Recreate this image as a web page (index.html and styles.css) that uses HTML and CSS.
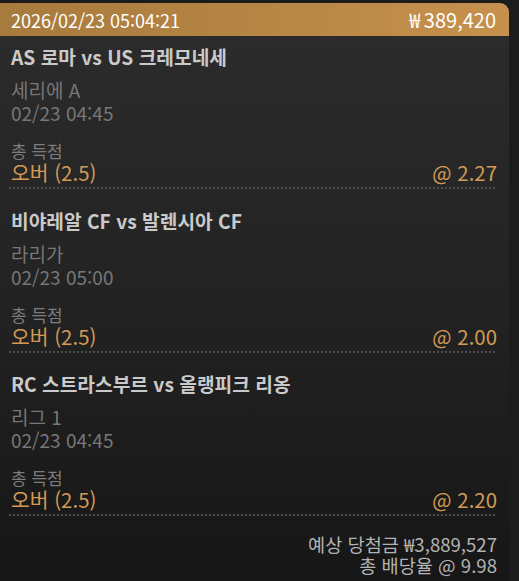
FILE: index.html
```html
<!DOCTYPE html>
<html lang="ko">
<head>
<meta charset="utf-8">
<link rel="stylesheet" href="styles.css">
</head>
<body>
<div class="panel">
  <div class="header">
    <span class="time">2026/02/23 05:04:21</span>
    <span class="stake">₩ 389,420</span>
  </div>
  <div class="item first">
    <div class="title">AS 로마 vs US 크레모네세</div>
    <div class="meta">세리에 A</div>
    <div class="meta">02/23 04:45</div>
    <div class="market">총 득점</div>
    <div class="pick"><span>오버 (2.5)</span><span>@ 2.27</span></div>
  </div>
  <div class="item">
    <div class="title">비야레알 CF vs 발렌시아 CF</div>
    <div class="meta">라리가</div>
    <div class="meta">02/23 05:00</div>
    <div class="market">총 득점</div>
    <div class="pick"><span>오버 (2.5)</span><span>@ 2.00</span></div>
  </div>
  <div class="item">
    <div class="title">RC 스트라스부르 vs 올랭피크 리옹</div>
    <div class="meta">리그 1</div>
    <div class="meta">02/23 04:45</div>
    <div class="market">총 득점</div>
    <div class="pick"><span>오버 (2.5)</span><span>@ 2.20</span></div>
  </div>
  <div class="footer">
    <div>예상 당첨금 ₩3,889,527</div>
    <div>총 배당율 @ 9.98</div>
  </div>
</div>
</body>
</html>
```
FILE: styles.css
```css
html, body {
  margin: 0;
  padding: 0;
  background: #1c1c1c;
  height: 100%;
}
body {
  font-family: "Noto Sans CJK KR", "Noto Sans", sans-serif;
  padding-top: 3px;
  box-sizing: border-box;
}
.panel {
  width: 509px;
  min-height: 578px;
  background: linear-gradient(to bottom, #2c2c2c 0%, #232323 50%, #161616 100%);
  border-radius: 0 9px 0 0;
}
.header {
  height: 33px;
  display: flex;
  justify-content: space-between;
  align-items: center;
  padding: 0 13px 0 11px;
  background: linear-gradient(to right, #a77a3d, #c6914c);
  border-radius: 0 9px 0 0;
  color: #ffffff;
  font-size: 18px;
}
.stake {
  font-size: 20px;
  word-spacing: -1px;
}
.item {
  padding: 18.5px 12px 0 9px;
}
.item.first {
  padding-top: 8px;
}
.title,
.meta,
.market {
  padding-left: 2px;
}
.title {
  font-size: 19.2px;
  font-weight: 700;
  color: #cacaca;
  line-height: 26px;
  margin-bottom: 8px;
}
.meta {
  font-size: 19px;
  color: #777777;
  line-height: 23px;
}
.market {
  font-size: 17px;
  color: #7d7d7d;
  line-height: 22px;
  margin-top: 16px;
}
.pick {
  display: flex;
  justify-content: space-between;
  font-size: 20.4px;
  color: #d39a55;
  line-height: 20px;
  padding: 0 0 7px 2px;
  background-image: repeating-linear-gradient(to right, #4e4e4e 0 2px, transparent 2px 4px);
  background-size: 100% 2px;
  background-repeat: no-repeat;
  background-position: left bottom;
}
.footer {
  padding: 17px 12px 0 0;
  text-align: right;
  font-size: 18.6px;
  line-height: 21px;
  color: #b3b3b3;
}
```
